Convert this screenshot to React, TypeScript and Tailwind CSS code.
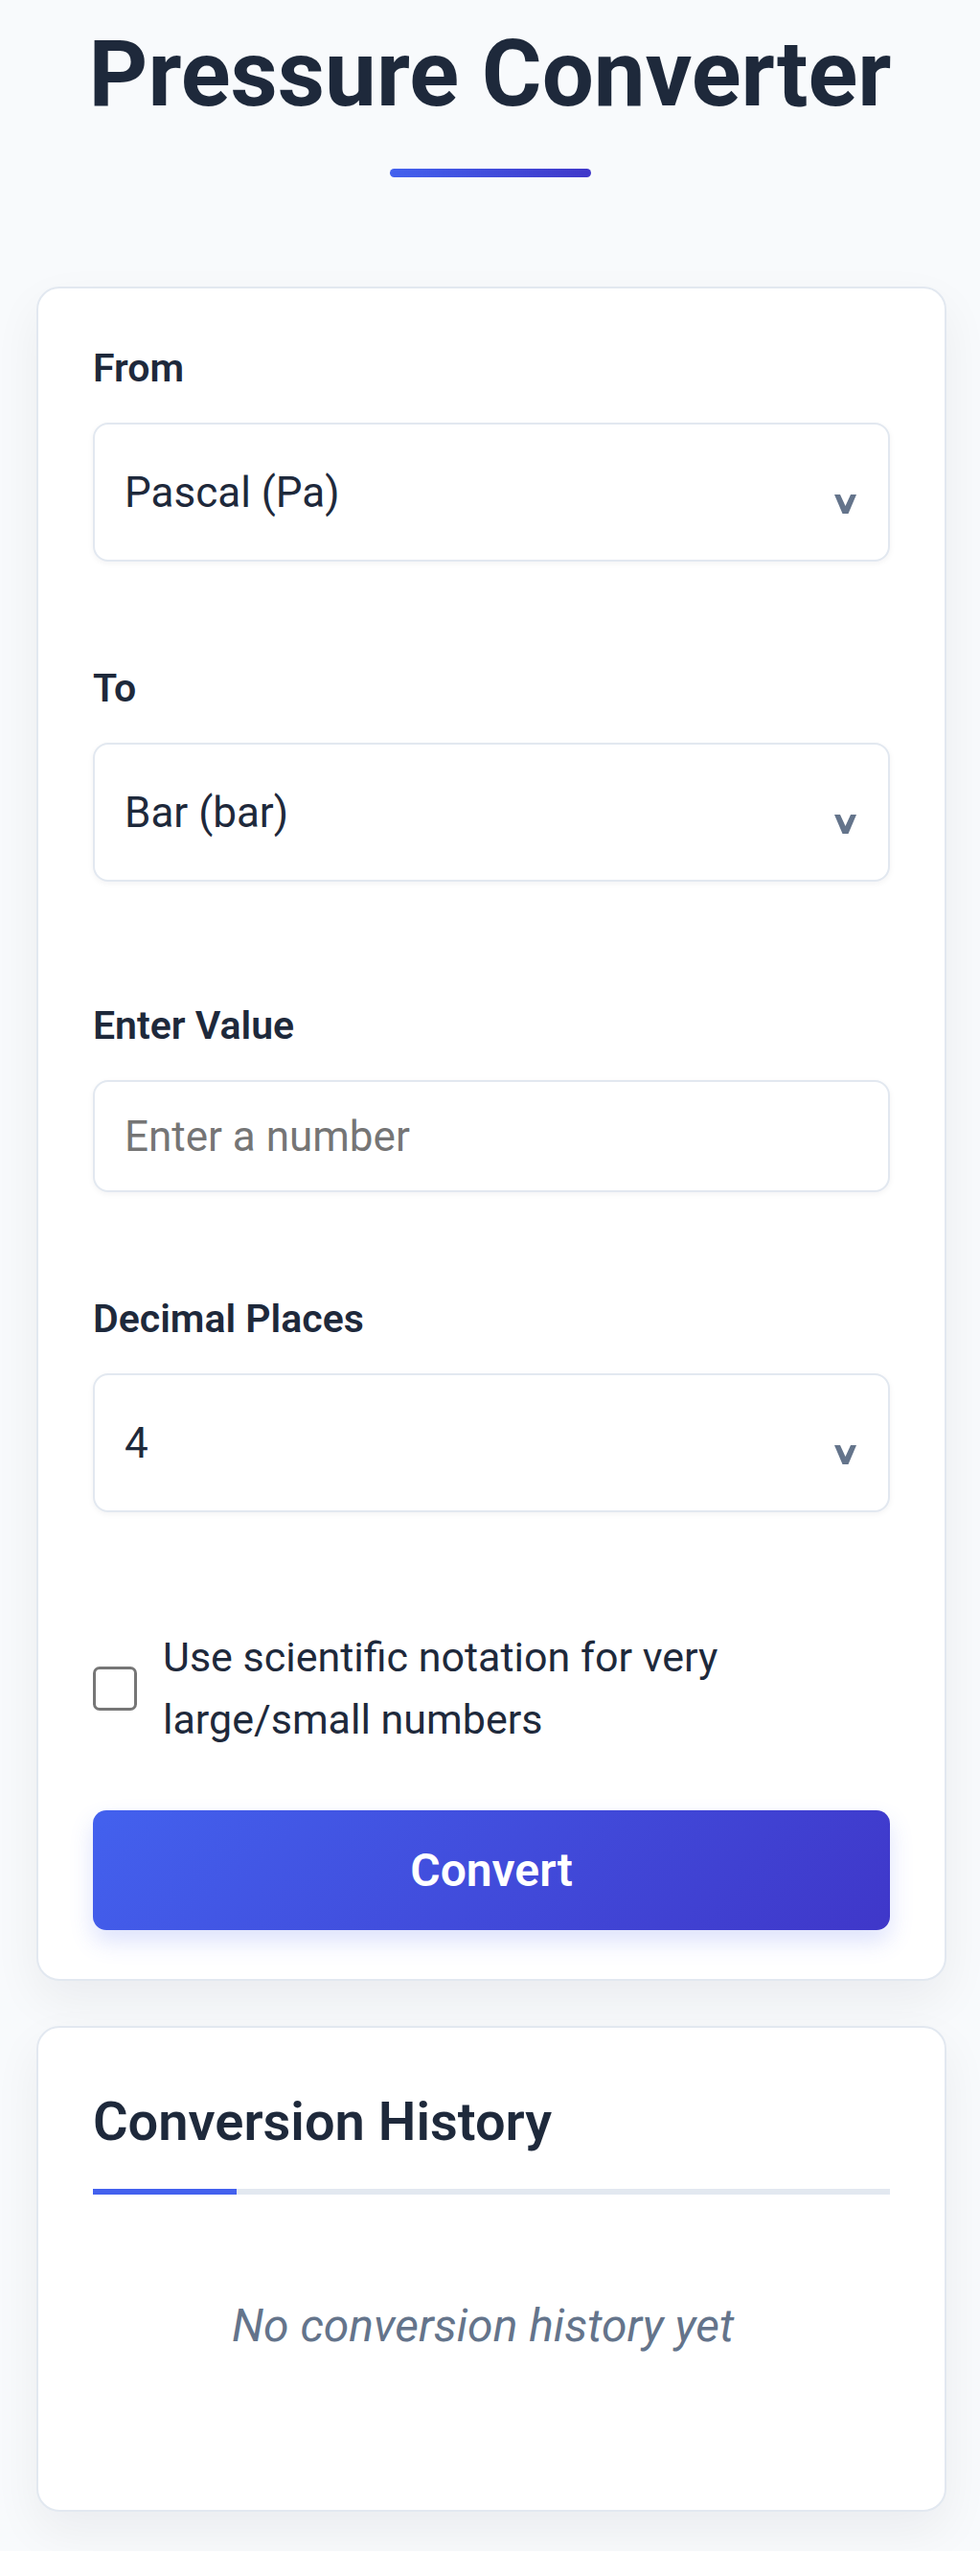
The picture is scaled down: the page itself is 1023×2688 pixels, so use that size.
import { useState } from "react";

const UNITS = ["Pascal (Pa)", "Kilopascal (kPa)", "Bar (bar)", "Atmosphere (atm)", "PSI (psi)", "Torr (Torr)"];

function Chevron() {
  return (
    <svg className="pointer-events-none absolute right-[35px] top-[75px]" width="23" height="20" viewBox="0 0 23 20">
      <path d="M0 0H6L11.5 12L17 0H23L14.5 20H8.5Z" fill="#64748b" />
    </svg>
  );
}

function SelectField({ value, options, onChange }: { value: string; options: string[]; onChange: (v: string) => void }) {
  return (
    <div className="relative">
      <select
        value={value}
        onChange={e => onChange(e.target.value)}
        className="block h-[145px] w-full appearance-none rounded-[16px] border-2 border-[#e2e8f0] bg-white pl-[31px] text-[44px] text-[#1e293b] shadow-[0_2px_6px_rgba(15,23,42,0.05)] outline-none"
      >
        {options.map(o => <option key={o} value={o}>{o}</option>)}
      </select>
      <Chevron />
    </div>
  );
}

function Label({ children }: { children: React.ReactNode }) {
  return <div className="mb-[28px] text-[41px] font-semibold leading-[57px] text-[#1e293b]">{children}</div>;
}

export default function App() {
  const [from, setFrom] = useState("Pascal (Pa)");
  const [to, setTo] = useState("Bar (bar)");
  const [value, setValue] = useState("");
  const [places, setPlaces] = useState("4");
  const [sci, setSci] = useState(false);

  return (
    <div className="bg-[#f8fafc] pb-[41px] pt-[20px] font-['Roboto','Liberation_Sans',sans-serif]">
      <h1 className="text-center text-[96px] font-bold leading-[114px] text-[#1e293b]">Pressure Converter</h1>
      <div className="mx-auto mt-[42px] h-[9px] w-[210px] rounded-full bg-[linear-gradient(90deg,#4361ee,#3f37c9)]" />

      <div className="ml-[38px] mr-[35px] mt-[114px] rounded-[24px] border-2 border-[#e2e8f0] bg-white px-[57px] pb-[51px] pt-[55px] shadow-[0_20px_50px_rgba(15,23,42,0.06)]">
        <Label>From</Label>
        <SelectField value={from} options={UNITS} onChange={setFrom} />

        <div className="mt-[104px]">
          <Label>To</Label>
          <SelectField value={to} options={UNITS} onChange={setTo} />
        </div>

        <div className="mt-[122px]">
          <Label>Enter Value</Label>
          <input
            type="number"
            value={value}
            onChange={e => setValue(e.target.value)}
            placeholder="Enter a number"
            className="block h-[117px] w-full rounded-[16px] border-2 border-[#e2e8f0] bg-white pl-[31px] text-[44px] text-[#1e293b] shadow-[0_2px_6px_rgba(15,23,42,0.05)] outline-none placeholder:text-[#757575]"
          />
        </div>

        <div className="mt-[104px]">
          <Label>Decimal Places</Label>
          <SelectField value={places} options={["0", "1", "2", "3", "4", "5", "6", "8", "10"]} onChange={setPlaces} />
        </div>

        <label className="mt-[119px] flex items-center gap-[27px]">
          <input
            type="checkbox"
            checked={sci}
            onChange={e => setSci(e.target.checked)}
            className="h-[46px] w-[46px] shrink-0 appearance-none rounded-[7px] border-[3px] border-[#767676] bg-white"
          />
          <span className="text-[43px] leading-[65px] text-[#1e293b]">Use scientific notation for very large/small numbers</span>
        </label>

        <button className="mt-[62px] block h-[125px] w-full rounded-[14px] bg-[linear-gradient(135deg,#4361ee,#3f37c9)] text-[48px] font-semibold text-white shadow-[0_12px_24px_rgba(67,97,238,0.18)]">
          Convert
        </button>
      </div>

      <div className="ml-[38px] mr-[35px] mt-[47px] rounded-[24px] border-2 border-[#e2e8f0] bg-white px-[57px] pb-[157px] pt-[65px] shadow-[0_20px_50px_rgba(15,23,42,0.06)]">
        <h2 className="text-[56px] font-semibold leading-[66px] text-[#1e293b]">Conversion History</h2>
        <div className="mt-[37px] flex h-[6px] bg-[#e2e8f0]">
          <div className="w-[150px] bg-[#4361ee]" />
        </div>
        <p className="mt-[102px] pr-[18px] text-center text-[48px] italic leading-[70px] text-[#64748b]">No conversion history yet</p>
      </div>
    </div>
  );
}
